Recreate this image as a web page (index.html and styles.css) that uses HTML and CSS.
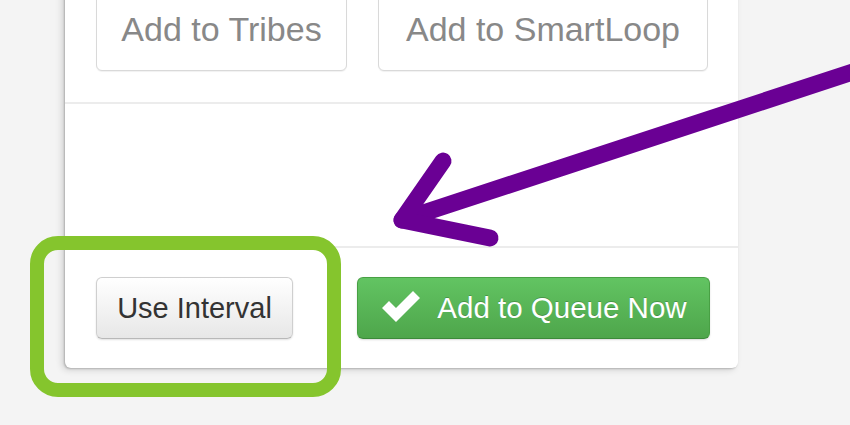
FILE: index.html
```html
<!DOCTYPE html>
<html>
<head>
<meta charset="utf-8">
<link rel="stylesheet" href="styles.css">
</head>
<body>
<div class="panel">
  <div class="section top-actions">
    <button class="btn-outline btn-tribes">Add to Tribes</button>
    <button class="btn-outline btn-smart">Add to SmartLoop</button>
  </div>
  <div class="section spacer"></div>
  <div class="section footer">
    <button class="btn-default">Use Interval</button>
    <button class="btn-success">
      <svg class="check" viewBox="0 0 40 32" width="40" height="32" aria-hidden="true">
        <path d="M1 17 L8 10 L15 17 L32 0 L39 7 L15 31 Z" fill="#fff"/>
      </svg>
      <span>Add to Queue Now</span>
    </button>
  </div>
</div>
<svg class="annotations" viewBox="0 0 850 425" width="850" height="425" aria-hidden="true">
  <rect x="37" y="243" width="297" height="147" rx="21" ry="21" fill="none" stroke="#85c52d" stroke-width="14"/>
  <path d="M880 63 L402 220" fill="none" stroke="#6a0094" stroke-width="17" stroke-linecap="round"/>
  <path d="M443 161 L402 220 L490 238" fill="none" stroke="#6a0094" stroke-width="17" stroke-linecap="round" stroke-linejoin="round"/>
</svg>
</body>
</html>
```
FILE: styles.css
```css
html, body {
  margin: 0;
  padding: 0;
}
body {
  width: 850px;
  height: 425px;
  overflow: hidden;
  background: #f4f4f4;
  font-family: "Liberation Sans", Arial, sans-serif;
  position: relative;
}
.panel {
  margin-left: 65px;
  margin-top: -30px;
  width: 673px;
  background: #fff;
  border-radius: 0 0 6px 6px;
  box-shadow: -1px 1px 2px rgba(0,0,0,0.2), -3px 2px 7px rgba(0,0,0,0.14);
}
.section {
  display: flex;
  align-items: center;
}
.top-actions {
  padding: 14px 0 31px 31px;
  gap: 31px;
  border-bottom: 2px solid #ececec;
}
.btn-outline {
  height: 87px;
  padding: 3px 0 0 0;
  background: #fff;
  border: 1px solid #d9d9d9;
  border-radius: 6px;
  box-shadow: 0 1px 1px rgba(0,0,0,0.06);
  font-family: "Liberation Sans", Arial, sans-serif;
  font-size: 34px;
  color: #888;
  text-align: center;
}
.btn-tribes { width: 251px; }
.btn-smart { width: 330px; }
.spacer {
  height: 142px;
  border-bottom: 2px solid #ececec;
}
.footer {
  padding: 29px 0 29px 31px;
  gap: 64px;
}
.btn-default {
  width: 197px;
  height: 62px;
  padding: 0;
  border: 1px solid #cfcfcf;
  border-bottom-color: #b8b8b8;
  border-radius: 6px;
  background: linear-gradient(#ffffff, #e7e7e7);
  box-shadow: 0 1px 2px rgba(0,0,0,0.12);
  font-family: "Liberation Sans", Arial, sans-serif;
  font-size: 29px;
  color: #333;
  text-align: center;
}
.btn-success {
  width: 353px;
  height: 62px;
  padding: 0 0 0 1px;
  display: flex;
  align-items: center;
  justify-content: center;
  gap: 16px;
  border: 1px solid #48a044;
  border-bottom-color: #3c8a3a;
  border-radius: 6px;
  background: linear-gradient(#62c462, #4ea64b);
  box-shadow: 0 1px 2px rgba(0,0,0,0.15);
  font-family: "Liberation Sans", Arial, sans-serif;
  font-size: 29.5px;
  color: #fff;
  text-shadow: 0 -1px 0 rgba(0,0,0,0.2);
}
.check {
  display: block;
  margin-top: -2px;
}
.annotations {
  position: absolute;
  left: 0;
  top: 0;
  pointer-events: none;
}
```
